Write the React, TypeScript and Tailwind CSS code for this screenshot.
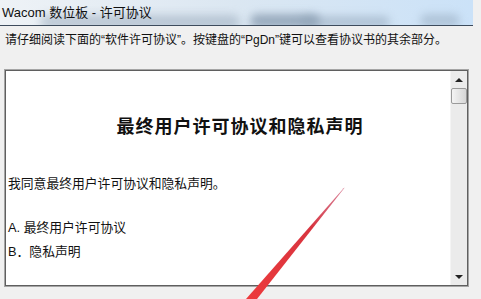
const font = "font-['Liberation_Sans','Noto_Sans_CJK_SC',sans-serif]"

function TitleBar() {
  return (
    <div className="relative h-[26px] w-[473px] overflow-hidden border-b border-[#3d4b5c] bg-gradient-to-r from-[#eef2f6] via-[#dbe7f2] to-[#cbe2f8]">
      {/* blurred desktop showing through the glass */}
      <div className="absolute left-[40px] top-[15px] h-[14px] w-[200px] rounded-full bg-[#9eaebf] opacity-60 blur-[5px]" />
      <div className="absolute left-[250px] top-[14px] h-[14px] w-[70px] rounded-full bg-[#7f93a8] opacity-70 blur-[4px]" />
      <div className="absolute left-[300px] top-[16px] h-[12px] w-[90px] rounded-full bg-[#8ea2b6] opacity-50 blur-[4px]" />
      <div className="absolute left-[420px] top-[14px] h-[13px] w-[40px] rounded-full bg-[#93a7bb] opacity-50 blur-[4px]" />
      <div className={`relative pl-[2px] text-[13px] leading-[25px] text-[#111] ${font}`}>
        Wacom 数位板 - 许可协议
      </div>
    </div>
  )
}

function ScrollBar() {
  return (
    <div className="flex w-[17px] flex-col items-center bg-[#ebebeb] border-l border-[#f4f4f4]">
      <div className="flex h-[17px] w-full items-center justify-center">
        <div className="h-0 w-0 border-x-[4px] border-b-[4px] border-x-transparent border-b-[#222]" />
      </div>
      <div className="h-[16px] w-[16px] rounded-[2px] border border-[#9a9a9a] bg-gradient-to-r from-[#f4f4f4] to-[#d6d6d6]" />
      <div className="flex-1" />
      <div className="flex h-[17px] w-full items-center justify-center">
        <div className="h-0 w-0 border-x-[4px] border-t-[4px] border-x-transparent border-t-[#222]" />
      </div>
    </div>
  )
}

export default function App() {
  return (
    <div className={`relative h-[299px] w-[481px] overflow-hidden bg-[#f0f0f0] ${font}`}>
      <TitleBar />
      <div className="pl-[5px] pt-[6px] text-[12px] leading-[16px] text-[#111]">
        请仔细阅读下面的“软件许可协议”。按键盘的“PgDn”键可以查看协议书的其余部分。
      </div>
      <div className="ml-[4px] mt-[21px] h-[218px] w-[465px] border border-[#a5a5a5]">
        <div className="flex h-full w-full border border-[#5f5f5f] bg-white">
          <div className="flex-1 pl-[2px] text-[#111]">
            <div className="pl-[22px] pt-[44px] text-center text-[18px] font-bold leading-[24px] tracking-[1px]">
              最终用户许可协议和隐私声明
            </div>
            <div className="mt-[35px] text-[12.8px] leading-[20px]">我同意最终用户许可协议和隐私声明。</div>
            <div className="mt-[24px] text-[12.8px] leading-[20px]">A. 最终用户许可协议</div>
            <div className="mt-[4px] text-[12.8px] leading-[20px]">B．隐私声明</div>
          </div>
          <ScrollBar />
        </div>
      </div>
      {/* red annotation stroke */}
      <svg className="pointer-events-none absolute left-0 top-0" width="481" height="299" viewBox="0 0 481 299">
        <defs>
          <linearGradient id="stroke" x1="344" y1="188" x2="250" y2="299" gradientUnits="userSpaceOnUse">
            <stop offset="0" stopColor="#c94a6a" stopOpacity="0.7" />
            <stop offset="0.35" stopColor="#d8343f" />
            <stop offset="1" stopColor="#ec3a3c" />
          </linearGradient>
        </defs>
        <polygon points="344.8,187.5 257,299 246,299 343.6,188.2" fill="url(#stroke)" />
      </svg>
    </div>
  )
}
